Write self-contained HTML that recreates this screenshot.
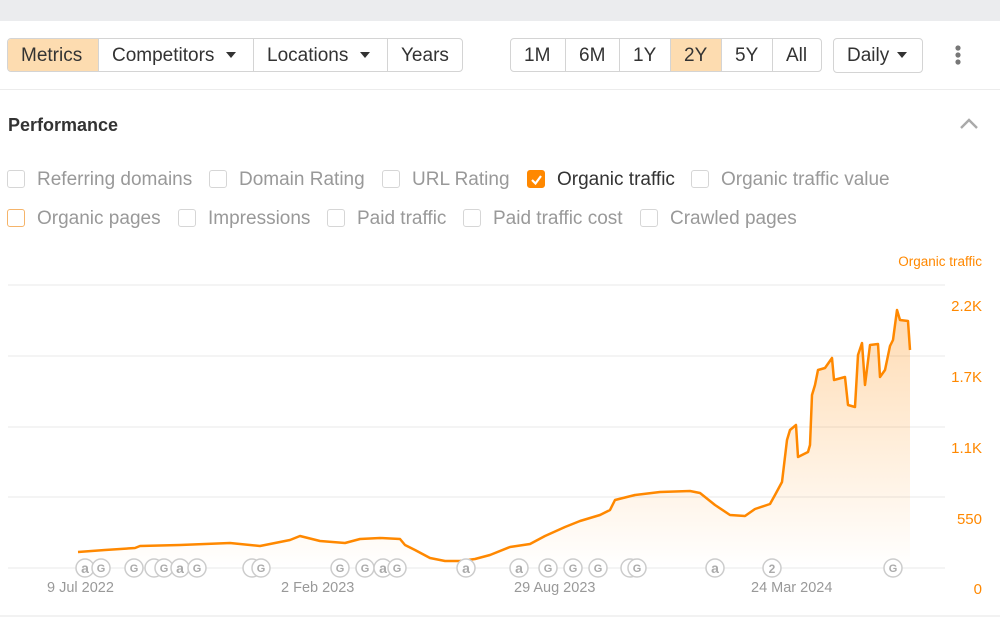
<!DOCTYPE html>
<html><head><meta charset="utf-8"><style>
*{box-sizing:border-box;margin:0;padding:0}
body{width:1000px;height:640px;background:#fff;font-family:"Liberation Sans",sans-serif;position:relative;overflow:hidden;color:#333}
.top{position:absolute;left:0;top:0;width:1000px;height:21px;background:#ebecee}
.grp{position:absolute;top:38px;height:34px;display:flex;border:1px solid #d4d4d4;border-radius:4px;overflow:hidden}
.grp div{height:32px;line-height:34px;font-size:19px;padding:0 13px;border-right:1px solid #d4d4d4;color:#333;white-space:nowrap}
.grp div:last-child{border-right:none}
.on{background:#fddcb0}
.tri{display:inline-block;width:0;height:0;border-left:5px solid transparent;border-right:5px solid transparent;border-top:6px solid #333;margin-left:12px;vertical-align:3px}
.hr{position:absolute;left:0;width:1000px;height:1px;background:#ececec}
.cb{position:absolute;font-size:19px;color:#999;white-space:nowrap}
.cb i{display:inline-block;width:18px;height:18px;border:1px solid #d6d6d6;border-radius:3px;vertical-align:-3px;margin-right:12px}
.yl{position:absolute;right:18px;font-size:15px;color:#ff8800}
.xl{position:absolute;top:580px;font-size:14.5px;color:#999}
</style></head><body>
<div class="top"></div>
<div class="grp" style="left:7px;width:456px">
<div class="on" style="width:91px">Metrics</div><div style="width:155px">Competitors<span class="tri"></span></div><div style="width:134px">Locations<span class="tri"></span></div><div style="flex:1">Years</div></div>
<div class="grp" style="left:510px;width:312px">
<div style="width:55px">1M</div><div style="width:54px">6M</div><div style="width:51px">1Y</div><div class="on" style="width:51px">2Y</div><div style="width:51px">5Y</div><div style="flex:1">All</div></div>
<div class="grp" style="left:833px;width:90px;height:35px"><div style="flex:1">Daily<span class="tri" style="margin-left:8px"></span></div></div>
<svg style="position:absolute;left:952px;top:44px" width="12" height="24"><circle cx="6" cy="4" r="2.6" fill="#777"/><circle cx="6" cy="11" r="2.6" fill="#777"/><circle cx="6" cy="18" r="2.6" fill="#777"/></svg>
<div class="hr" style="top:89px"></div>
<div style="position:absolute;left:8px;top:115px;font-size:18px;font-weight:bold;color:#333">Performance</div>
<svg style="position:absolute;left:959px;top:117px" width="20" height="13"><path d="M2 11 L10 3 L18 11" fill="none" stroke="#aaa" stroke-width="2.4"/></svg>
<div class="cb" style="left:7px;top:169px"><i></i>Referring domains</div>
<div class="cb" style="left:209px;top:169px"><i></i>Domain Rating</div>
<div class="cb" style="left:382px;top:169px"><i></i>URL Rating</div>
<div class="cb" style="left:527px;top:169px;color:#333"><i style="background:#ff8800;border-color:#ff8800;position:relative"><svg style="position:absolute;left:2px;top:2px" width="13" height="13"><path d="M2 7 L5.5 10.5 L11 3" fill="none" stroke="#fff" stroke-width="2.2"/></svg></i>Organic traffic</div>
<div class="cb" style="left:691px;top:169px"><i></i>Organic traffic value</div>
<div class="cb" style="left:7px;top:208px"><i style="border-color:#f5b46a"></i>Organic pages</div>
<div class="cb" style="left:178px;top:208px"><i></i>Impressions</div>
<div class="cb" style="left:327px;top:208px"><i></i>Paid traffic</div>
<div class="cb" style="left:463px;top:208px"><i></i>Paid traffic cost</div>
<div class="cb" style="left:640px;top:208px"><i></i>Crawled pages</div>
<div class="yl" style="top:254px;font-size:13.5px">Organic traffic</div>
<svg style="position:absolute;left:0;top:0" width="1000" height="640">
<defs><linearGradient id="g" x1="0" y1="0" x2="0" y2="1"><stop offset="0" stop-color="#ff8800" stop-opacity=".3"/><stop offset="1" stop-color="#ff8800" stop-opacity="0"/></linearGradient></defs>
<g stroke="#e8e8e8" stroke-width="1"><line x1="8" y1="285" x2="945" y2="285"/><line x1="8" y1="356" x2="945" y2="356"/><line x1="8" y1="427" x2="945" y2="427"/><line x1="8" y1="497" x2="945" y2="497"/><line x1="8" y1="568" x2="945" y2="568"/></g>
<line x1="0" y1="616" x2="1000" y2="616" stroke="#e4e4e4"/>
<path d="M78 552 L105 550 L135 548 L140 546 L180 545 L230 543 L260 546 L290 540 L300 536 L320 541 L345 543 L360 539 L380 538 L400 539 L405 545 L415 550 L430 558 L445 561 L460 561 L475 559 L490 555 L510 547 L530 544 L545 536 L565 527 L580 521 L600 515 L610 510 L615 500 L635 495 L660 492 L690 491 L700 493 L715 505 L730 515 L745 516 L755 509 L770 504 L775 495 L782 482 L787 440 L790 430 L796 425 L798 457 L808 452 L810 445 L812 395 L815 385 L818 370 L825 368 L832 358 L834 380 L845 377 L848 405 L855 407 L858 355 L862 343 L865 385 L870 345 L878 344 L880 377 L885 370 L890 346 L893 340 L897 310 L900 320 L908 321 L910 350" fill="none" stroke="#ff8800" stroke-width="2.5" stroke-linejoin="round"/>
<path d="M78 552 L105 550 L135 548 L140 546 L180 545 L230 543 L260 546 L290 540 L300 536 L320 541 L345 543 L360 539 L380 538 L400 539 L405 545 L415 550 L430 558 L445 561 L460 561 L475 559 L490 555 L510 547 L530 544 L545 536 L565 527 L580 521 L600 515 L610 510 L615 500 L635 495 L660 492 L690 491 L700 493 L715 505 L730 515 L745 516 L755 509 L770 504 L775 495 L782 482 L787 440 L790 430 L796 425 L798 457 L808 452 L810 445 L812 395 L815 385 L818 370 L825 368 L832 358 L834 380 L845 377 L848 405 L855 407 L858 355 L862 343 L865 385 L870 345 L878 344 L880 377 L885 370 L890 346 L893 340 L897 310 L900 320 L908 321 L910 350 L910 568 L78 568Z" fill="url(#g)"/>
<g font-family="Liberation Sans,sans-serif" font-size="14" font-weight="bold" fill="#aaa" text-anchor="middle">
<g fill="#fff" stroke="#ccc" stroke-width="1.5">
<circle cx="85" cy="568" r="9"/><circle cx="101" cy="568" r="9"/><circle cx="134" cy="568" r="9"/><circle cx="154" cy="568" r="9"/><circle cx="164" cy="568" r="9"/><circle cx="180" cy="568" r="9"/><circle cx="197" cy="568" r="9"/><circle cx="252" cy="568" r="9"/><circle cx="261" cy="568" r="9"/><circle cx="340" cy="568" r="9"/><circle cx="365" cy="568" r="9"/><circle cx="383" cy="568" r="9"/><circle cx="397" cy="568" r="9"/><circle cx="466" cy="568" r="9"/><circle cx="519" cy="568" r="9"/><circle cx="548" cy="568" r="9"/><circle cx="573" cy="568" r="9"/><circle cx="598" cy="568" r="9"/><circle cx="630" cy="568" r="9"/><circle cx="637" cy="568" r="9"/><circle cx="715" cy="568" r="9"/><circle cx="772" cy="568" r="9"/><circle cx="893" cy="568" r="9"/></g>
<text x="85" y="573">a</text><text x="101" y="572" font-size="11">G</text><text x="134" y="572" font-size="11">G</text><text x="164" y="572" font-size="11">G</text><text x="180" y="573">a</text><text x="197" y="572" font-size="11">G</text><text x="261" y="572" font-size="11">G</text><text x="340" y="572" font-size="11">G</text><text x="365" y="572" font-size="11">G</text><text x="383" y="573">a</text><text x="397" y="572" font-size="11">G</text><text x="466" y="573">a</text><text x="519" y="573">a</text><text x="548" y="572" font-size="11">G</text><text x="573" y="572" font-size="11">G</text><text x="598" y="572" font-size="11">G</text><text x="637" y="572" font-size="11">G</text><text x="715" y="573">a</text><text x="772" y="573" font-size="12">2</text><text x="893" y="572" font-size="11">G</text>
</g></svg>
<div class="yl" style="top:298px">2.2K</div>
<div class="yl" style="top:369px">1.7K</div>
<div class="yl" style="top:440px">1.1K</div>
<div class="yl" style="top:511px">550</div>
<div class="yl" style="top:581px">0</div>
<div class="xl" style="left:47px">9 Jul 2022</div>
<div class="xl" style="left:281px">2 Feb 2023</div>
<div class="xl" style="left:514px">29 Aug 2023</div>
<div class="xl" style="left:751px">24 Mar 2024</div>
</body></html>
